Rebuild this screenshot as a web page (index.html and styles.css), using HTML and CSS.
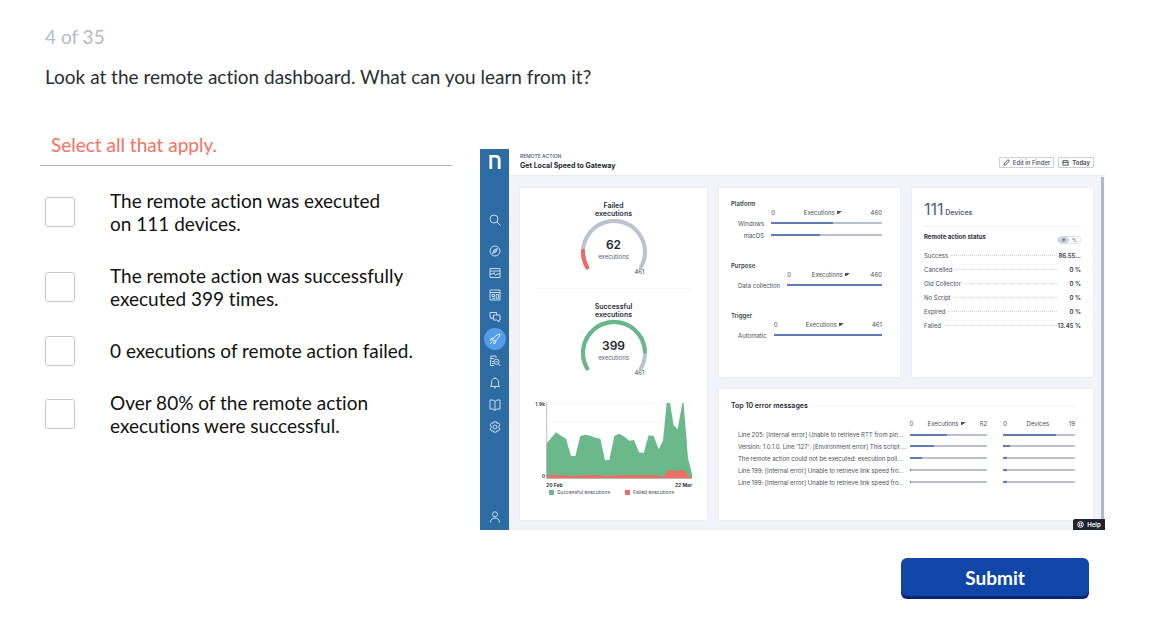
FILE: index.html
```html
<!DOCTYPE html>
<html lang="en">
<head>
<meta charset="utf-8">
<title>Question 4 of 35</title>
<link rel="stylesheet" href="styles.css">
</head>
<body>
<form class="quiz">
  <p class="counter">4 of 35</p>
  <h1 class="question">Look at the remote action dashboard. What can you learn from it?</h1>
  <div class="columns">
    <section class="answers">
      <h2 class="hint">Select all that apply.</h2>
      <ul class="options">
        <li class="option"><input class="box" type="checkbox" id="a1"><label for="a1">The remote action was executed<br>on 111 devices.</label></li>
        <li class="option"><input class="box" type="checkbox" id="a2"><label for="a2">The remote action was successfully<br>executed 399 times.</label></li>
        <li class="option"><input class="box" type="checkbox" id="a3"><label for="a3">0 executions of remote action failed.</label></li>
        <li class="option"><input class="box" type="checkbox" id="a4"><label for="a4">Over 80% of the remote action<br>executions were successful.</label></li>
      </ul>
    </section>

    <section class="dash">
      <nav class="side">
        <svg class="logo" viewBox="0 0 12 15"><path d="M1.500 15V1.200H6c3 0 4.500 1.600 4.500 4.300V15" /></svg>
        <div class="menu">
          <svg class="ico search" viewBox="0 0 12 12"><circle cx="5" cy="5" r="4"/><path d="M8 8l3.500 3.500"/></svg>
          <svg class="ico" viewBox="0 0 12 12"><circle cx="6" cy="6" r="5"/><path d="M3.500 8.500L5 5l3.500-1.500L7 7z"/><circle cx="6" cy="6" r=".6"/></svg>
          <svg class="ico" viewBox="0 0 12 12"><path d="M1 1.500h10v9H1zM1 4h10M1 7h3l1-1.500L6.500 8.500 8 7h3"/></svg>
          <svg class="ico" viewBox="0 0 12 12"><path d="M1 1h10v10H1zM1 3.500h10M3 5.500h2.500v2H3zM3 9.300h3M7.200 5.500H9.500v3.800H7.200z"/></svg>
          <svg class="ico" viewBox="0 0 12 12"><path d="M4 6.500L2 8V6H1V1.500h6.500V4M4.500 4H11v5h-1v2L7.800 9H4.500z"/></svg>
          <span class="active"><svg class="ico" viewBox="0 0 12 12"><path d="M4 6.500C5.500 3.500 8 1.500 11 1c-.5 3-2.500 5.500-5.500 7zM4.500 5L2 5.500 1 7l2.500.2M7 7.500L6.500 10 5 11 4.800 8.500M3.300 8.700L1 11"/></svg></span>
          <svg class="ico" viewBox="0 0 12 12"><path d="M2 4.500V1h5v2M1 3.500h4M1.500 5v5.500H5M3 6.500h2M3 8.500h1.500"/><circle cx="7.500" cy="6.800" r="2.600"/><path d="M9.300 8.800l2 2.200M6.300 6.800h2.400"/></svg>
          <svg class="ico" viewBox="0 0 12 12"><path d="M1.500 9.500h9L9.500 8V5C9.500 2.800 8 1.300 6 1.300S2.500 2.800 2.500 5v3zM5 10.800h2M6 .3v1"/></svg>
          <svg class="ico" viewBox="0 0 12 12"><path d="M6 2.500L4 1H1v9h3l2 1.300L8 10h3V1H8zM6 2.500v8.800"/></svg>
          <svg class="ico" viewBox="0 0 12 12"><path d="M4.700.8h2.600l.5 1.500 1.600-.4 1.500 2-1 1.200v1.800l1 1.200-1.500 2-1.600-.4-.5 1.500H4.700l-.5-1.500-1.600.4-1.500-2 1-1.200V5.100l-1-1.200 1.500-2 1.600.4z"/><circle cx="6" cy="6" r="2"/></svg>
        </div>
        <svg class="ico user" viewBox="0 0 12 12"><circle cx="6" cy="3.300" r="2.500"/><path d="M1.500 11.500c0-3 1.800-4.500 4.500-4.500s4.500 1.500 4.500 4.500"/></svg>
      </nav>
      <div class="body">
        <header class="top">
          <div>
            <p class="crumb">REMOTE ACTION</p>
            <h3 class="name">Get Local Speed to Gateway</h3>
          </div>
          <div class="tools">
            <button class="tool" type="button"><svg viewBox="0 0 8 8"><path d="M1 7l.7-2.300L5.500 1Q7.500.8 7 2.700L3.300 6.400z"/></svg>Edit in Finder</button>
            <button class="tool strong" type="button"><svg viewBox="0 0 8 8"><path d="M1 2h6v5H1zM1 4h6M2.500 1v1M5.500 1v1"/></svg>Today</button>
          </div>
        </header>
        <div class="canvas">
          <div class="cards">
            <article class="card charts">
              <h4 class="gauge-title">Failed<br>executions</h4>
              <div class="gauge">
                <svg viewBox="0 0 66 52"><path class="track" d="M6.200 48.500A31 31 0 1 1 59.800 48.500"/><path class="arc fail" pathLength="100" stroke-dasharray="13.400 100" d="M6.200 48.500A31 31 0 1 1 59.800 48.500"/></svg>
                <p class="reading"><b>62</b>executions</p>
              </div>
              <p class="max">461</p>
              <h4 class="gauge-title second">Successful<br>executions</h4>
              <div class="gauge">
                <svg viewBox="0 0 66 52"><path class="track" d="M6.200 48.500A31 31 0 1 1 59.800 48.500"/><path class="arc ok" pathLength="100" stroke-dasharray="86.500 100" d="M6.200 48.500A31 31 0 1 1 59.800 48.500"/></svg>
                <p class="reading"><b>399</b>executions</p>
              </div>
              <p class="max">461</p>
              <div class="plot">
                <div class="scale"><span>1.9k</span><span>0</span></div>
                <svg class="area" viewBox="212 36 438 231" preserveAspectRatio="none">
                  <path class="grid" d="M214 40H650M214 98H650M214 154H650M214 210H650"/>
                  <path class="green" d="M214 265V160L242 127 258 138 272 146 287 198H300L315 138 330 134 345 137 360 143 375 146 389 211 402 210 417 137 432 131 447 140 462 152 476 150 491 187 505 189 520 136 535 138 550 178 563 152 574 39H584L595 106 607 118 621 39H625L638 205 650 252V265Z"/>
                  <path class="red" d="M214 265V256H270L290 258 315 256H380L395 259 415 256H540L565 260 577 240 600 243 625 240 640 258 650 262V265Z"/>
                  <path class="axis" d="M214 36V266H650"/>
                </svg>
              </div>
              <div class="dates"><span>20 Feb</span><span>22 Mar</span></div>
              <div class="legend"><span class="key ok-key">Successful executions</span><span class="key fail-key">Failed executions</span></div>
            </article>

            <article class="card groups">
              <section>
                <h4 class="group-title">Platform</h4>
                <table class="bars">
                  <tr><td></td><th><div class="range"><span>0</span><span class="sort">Executions</span><span>460</span></div></th></tr>
                  <tr><td>Windows</td><td><div class="bar"><i style="width:56%"></i></div></td></tr>
                  <tr><td>macOS</td><td><div class="bar"><i style="width:44%"></i></div></td></tr>
                </table>
              </section>
              <section>
                <h4 class="group-title">Purpose</h4>
                <table class="bars">
                  <tr><td></td><th><div class="range"><span>0</span><span class="sort">Executions</span><span>460</span></div></th></tr>
                  <tr><td>Data collection</td><td><div class="bar"><i style="width:100%"></i></div></td></tr>
                </table>
              </section>
              <section>
                <h4 class="group-title">Trigger</h4>
                <table class="bars">
                  <tr><td></td><th><div class="range"><span>0</span><span class="sort">Executions</span><span>461</span></div></th></tr>
                  <tr><td>Automatic</td><td><div class="bar"><i style="width:100%"></i></div></td></tr>
                </table>
              </section>
            </article>

            <article class="card devices">
              <p class="total"><b>111</b> Devices</p>
              <div class="status-head"><h4>Remote action status</h4><span class="toggle"><span class="on">#</span><span>%</span></span></div>
              <dl class="status">
                <div><dt>Success</dt><dd>86.55...</dd></div>
                <div><dt>Cancelled</dt><dd>0 %</dd></div>
                <div><dt>Old Collector</dt><dd>0 %</dd></div>
                <div><dt>No Script</dt><dd>0 %</dd></div>
                <div><dt>Expired</dt><dd>0 %</dd></div>
                <div><dt>Failed</dt><dd>13.45 %</dd></div>
              </dl>
            </article>

            <article class="card errors">
              <h4 class="errors-title">Top 10 error messages</h4>
              <table class="bars error-table">
                <tr><td></td><th><div class="range"><span>0</span><span class="sort">Executions</span><span>62</span></div></th><th><div class="range"><span>0</span><span>Devices</span><span>19</span></div></th></tr>
                <tr><td>Line 205: [Internal error] Unable to retrieve RTT from pin...</td><td><div class="bar"><i style="width:48%"></i></div></td><td><div class="bar"><i style="width:74%"></i></div></td></tr>
                <tr><td>Version: 1.0.1.0. Line '127': [Environment error] This script ...</td><td><div class="bar"><i style="width:32%"></i></div></td><td><div class="bar"><i style="width:10%"></i></div></td></tr>
                <tr><td>The remote action could not be executed: execution poli...</td><td><div class="bar"><i style="width:16%"></i></div></td><td><div class="bar"><i style="width:5%"></i></div></td></tr>
                <tr><td>Line 199: [Internal error] Unable to retrieve link speed fro...</td><td><div class="bar"><i style="width:2%"></i></div></td><td><div class="bar"><i style="width:5%"></i></div></td></tr>
                <tr><td>Line 199: [Internal error] Unable to retrieve link speed fro...</td><td><div class="bar"><i style="width:2%"></i></div></td><td><div class="bar"><i style="width:5%"></i></div></td></tr>
              </table>
            </article>
          </div>
          <div class="scroll"></div>
        </div>
      </div>
      <button class="help" type="button"><svg viewBox="0 0 8 8"><circle cx="4" cy="4" r="3.300"/><circle cx="4" cy="4" r="1.500"/><path d="M1.500 1.500l1.500 1.500M6.500 1.500L5 3M1.500 6.500L3 5M6.500 6.500L5 5"/></svg>Help</button>
    </section>
  </div>
  <div class="actions"><button class="submit" type="submit">Submit</button></div>
</form>
</body>
</html>
```

FILE: styles.css
```css
* { box-sizing: border-box; margin: 0; padding: 0; }
body { background: #fff; color: #111; font-family: Lato, "Liberation Sans", sans-serif; font-size: 19px; line-height: 23px; font-variant-ligatures: none; }
ul { list-style: none; }
table { border-collapse: collapse; }
svg { display: block; fill: none; }
button { font: inherit; border: 0; }

.quiz { padding: 25px 47px 30px 40px; }
.counter { padding-left: 5px; color: #b4bac8; }
.question { padding: 17px 5px 0; font-size: 19px; font-weight: 400; color: #2a2d33; }
.columns { display: grid; grid-template-columns: 412fr 625fr; gap: 28px; margin-top: 61px; }
.hint { padding: 0 11px 9px; border-bottom: 1px solid #b3b3b8; font-size: 19px; font-weight: 400; color: #f8705f; }
.answers { margin-top: -16px; }
.options { display: grid; gap: 29px; margin-top: 23px; padding-left: 5px; }
.option { display: flex; align-items: center; gap: 35px; }
.box { appearance: none; flex: none; width: 30px; height: 30px; margin: -4px 0; border: 1px solid #c9c9c9; border-radius: 3px; background: #fff; }
.box:checked { background: #0f46a8; }

.dash { position: relative; display: flex; font-family: Inter, "Liberation Sans", sans-serif; font-size: 6px; line-height: 9px; color: #4a4d57; }
.side { display: flex; flex-direction: column; align-items: center; flex: none; width: 29px; padding: 6px 0 7px; background: #2c6ca3; }
.logo { width: 12px; height: 14px; stroke: #fff; stroke-width: 3; }
.menu { display: grid; justify-items: center; align-content: start; gap: 10px; flex: 1; margin-top: 45px; }
.ico { width: 12px; height: 12px; stroke: #c6def2; stroke-width: 1; }
.search { margin-bottom: 9px; }
.active { display: grid; place-items: center; width: 22px; height: 22px; margin: -5px 0; border-radius: 50%; background: #549ce8; }
.active .ico { stroke: #e3f1ff; }

.body { display: flex; flex-direction: column; flex: 1; min-width: 0; }
.top { display: flex; justify-content: space-between; padding: 3px 11px 5px; border-bottom: 1px solid #e9eaf0; }
.crumb { font-size: 5px; font-weight: 500; color: #4c5272; }
.name { font-size: 7px; font-weight: 700; color: #24262e; }
.tools { display: flex; align-items: center; gap: 4px; padding-top: 3px; }
.tool { display: flex; align-items: center; gap: 3px; height: 11px; padding: 0 3px; border: 1px solid #ccced8; border-radius: 1px; background: #fff; color: #464957; font-weight: 500; }
.tool svg { width: 7px; height: 7px; stroke: #464957; stroke-width: 1; }
.strong { font-weight: 600; }

.canvas { display: flex; flex: 1; background: #f3f4f9; }
.cards { display: grid; grid-template-columns: 187fr 181fr 181fr; grid-template-rows: 189fr 131fr; gap: 12px; flex: 1; padding: 12px 8px 10px 11px; }
.scroll { width: 3px; margin: 1px 1px 0 0; background: #b3b8cb; }
.card { background: #fff; box-shadow: 0 0 2px #e3e5ee; min-width: 0; }

.charts { grid-row: span 2; padding: 14px 15px 25px; }
.gauge-title { text-align: center; font-size: 7px; font-weight: 600; line-height: 8px; color: #2c2f38; }
.gauge { position: relative; width: 66px; margin: 1px auto 0; }
.gauge svg { width: 66px; height: 52px; }
.gauge path { stroke-width: 4; stroke-linecap: round; }
.track { stroke: #bcc1d0; }
.arc.fail { stroke: #ee6b62; }
.arc.ok { stroke: #68b788; }
.reading { position: absolute; inset: 18px 0 0; text-align: center; color: #545b78; }
.reading b { display: block; font-size: 12px; font-weight: 600; line-height: 15px; color: #24272f; }
.max { width: 66px; margin: -4px auto 0; padding-right: 2px; text-align: right; }
.second { margin-top: 12px; padding-top: 14px; border-top: 1px solid #f5f5f8; }
.plot { display: flex; gap: 1px; margin-top: 25px; }
.scale { display: flex; flex-direction: column; justify-content: space-between; width: 10px; text-align: right; font-size: 5px; font-weight: 600; line-height: 5px; color: #33363f; }
.scale span { display: block; margin-left: -4px; }
.area { flex: 1; min-width: 0; height: 77px; }
.grid { stroke: #eef0f4; stroke-width: 2; }
.green { fill: #6bb98b; }
.red { fill: #ec6e65; }
.axis { stroke: #a99ea6; stroke-width: 2; }
.dates { display: flex; justify-content: space-between; padding-left: 11px; font-size: 5px; font-weight: 700; line-height: 7px; margin-top: 3px; color: #33363f; }
.legend { display: flex; gap: 15px; padding-left: 14px; line-height: 6px; font-size: 5px; white-space: nowrap; }
.key { display: flex; align-items: center; gap: 3px; }
.key::before { content: ""; width: 5px; height: 5px; background: #6bb98b; }
.fail-key::before { background: #ec6e65; }

.groups { display: grid; align-content: start; gap: 20px; padding: 11px 18px 0 12px; }
.group-title { font-size: 6px; font-weight: 600; color: #3c3f49; }
.bars { width: 100%; }
.bars td { height: 12px; white-space: nowrap; }
.bars tr:first-child > * { height: 9px; }
.bars th { font-weight: 400; }
.bars td:first-child { width: 1px; padding: 0 7px; text-align: right; }
.range { display: flex; justify-content: space-between; }
.sort::after { content: ""; display: inline-block; width: 5px; height: 3px; margin: 0 0 1px 2px; background: #4a4d57; clip-path: polygon(0 0, 100% 0, 70% 50%, 30% 100%, 0 100%); }
.bar { height: 2px; background: #bbc0d1; }
.bar i { display: block; height: 2px; background: #5f7cb8; }

.devices { padding: 12px 12px 0; }
.total { padding-bottom: 4px; border-bottom: 1px solid #eeeff4; font-size: 7px; font-weight: 600; line-height: 18px; color: #555c80; }
.total b { font-size: 16px; font-weight: 400; }
.status-head { display: flex; align-items: center; justify-content: space-between; height: 14px; margin-top: 6px; }
.status-head h4 { font-size: 6px; font-weight: 700; color: #2c2f38; line-height: 8px; margin-bottom: 6px; }
.toggle { display: flex; border: 1px solid #dcdfe9; border-radius: 4px; font-size: 5px; line-height: 6px; }
.toggle span { width: 11px; text-align: center; border-radius: 4px; }
.toggle .on { background: #ccd1e2; }
.status { margin-top: 1px; }
.status div { display: flex; align-items: center; height: 14px; }
.status dt { display: flex; align-items: center; flex: 1; gap: 3px; }
.status dt::after { content: ""; flex: 1; border-top: 1px dotted #ced1da; }
.status dd { min-width: 24px; text-align: right; font-weight: 600; color: #33363f; }

.errors { grid-column: span 2; padding: 12px 18px 0 12px; }
.errors-title { display: flex; align-items: center; gap: 4px; margin-bottom: 8px; font-size: 7px; font-weight: 600; line-height: 10px; color: #24262e; }
.errors-title::after { content: ""; flex: 1; border-top: 1px solid #f3f4f7; }
.error-table td:first-child { padding-right: 3px; text-align: left; }
.error-table tr:nth-child(2) td { padding-top: 1px; }
.error-table th:nth-child(2) { width: 23%; }
.error-table th:last-child { width: 26%; }
.error-table th:last-child, .error-table td:last-child { padding-left: 16px; }

.help { position: absolute; right: 0; bottom: 0; display: flex; align-items: center; justify-content: center; gap: 3px; width: 32px; height: 11px; background: #20242d; color: #fff; font-weight: 600; border-radius: 2px 0 0; }
.help svg { width: 7px; height: 7px; stroke: #fff; stroke-width: 1; }

.actions { display: flex; justify-content: flex-end; padding: 28px 16px 0 0; }
.submit { width: 188px; height: 38px; border-radius: 6px; background: #0f46a8; box-shadow: 0 3px 0 #0a2270; color: #fff; font-size: 19px; font-weight: 700; }
```
